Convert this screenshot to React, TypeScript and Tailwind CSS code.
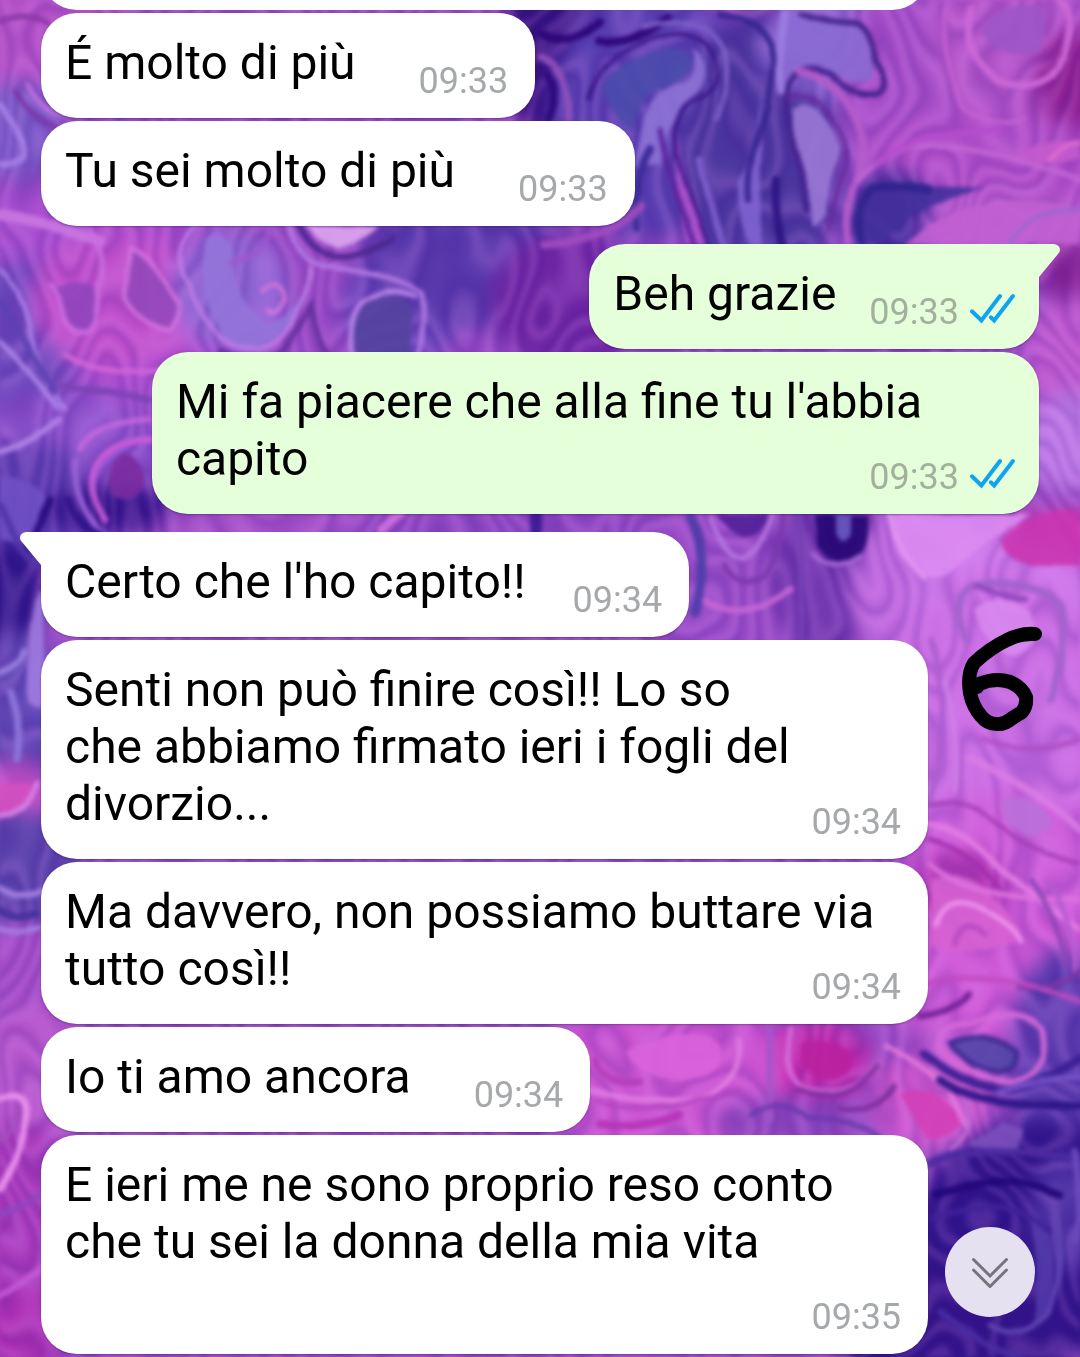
import type { ReactNode } from "react";

type Blob = [cx: number, cy: number, rx: number, ry: number, fill: string];
type Shape = [d: string, fill: string];
type Line = [d: string, stroke: string, width: number];

const washes: Blob[] = [
  [40, 40, 90, 70, "#b552c8"],
  [20, 130, 45, 50, "#7d5cc9"],
  [60, 300, 200, 110, "#a84fd0"],
  [20, 340, 60, 80, "#6d49bd"],
  [120, 300, 90, 70, "#c050cc"],
  [230, 290, 60, 60, "#8d63d2"],
  [400, 310, 60, 60, "#6c48bd"],
  [470, 260, 110, 70, "#5a3bad"],
  [570, 300, 80, 70, "#6f26a4"],
  [560, 50, 60, 90, "#33107f"],
  [650, 110, 100, 130, "#5a40b2"],
  [760, 160, 80, 150, "#4c389f"],
  [830, 50, 70, 50, "#8a66d2"],
  [930, 90, 90, 120, "#a74fc9"],
  [1010, 40, 80, 90, "#b657cb"],
  [1075, 90, 40, 60, "#8d1f92"],
  [990, 170, 130, 60, "#b24fc9"],
  [890, 220, 45, 50, "#3f2c99"],
  [1010, 230, 90, 40, "#ba5cd0"],
  [1070, 270, 30, 30, "#8a2596"],
  [1070, 360, 45, 60, "#c05ad0"],
  [1070, 440, 45, 50, "#bf7de8"],
  [1060, 540, 70, 30, "#c83cb4"],
  [60, 470, 110, 80, "#8a50ca"],
  [30, 500, 60, 60, "#5c3db0"],
  [115, 510, 70, 25, "#33148a"],
  [250, 522, 90, 30, "#a552c8"],
  [520, 522, 150, 20, "#8e48c2"],
  [10, 600, 35, 60, "#2c1588"],
  [20, 720, 45, 90, "#6249b6"],
  [15, 790, 40, 30, "#cf58cc"],
  [20, 870, 60, 60, "#5b43ac"],
  [20, 960, 50, 40, "#a34cc8"],
  [720, 570, 60, 80, "#9a4dc8"],
  [830, 570, 60, 90, "#6f35ad"],
  [920, 590, 70, 90, "#c06adf"],
  [1000, 600, 90, 70, "#cf7aec"],
  [1000, 720, 120, 150, "#cb6ee4"],
  [1010, 880, 110, 90, "#cf5fdb"],
  [960, 890, 50, 40, "#b93bb8"],
  [1000, 980, 130, 70, "#d05bd8"],
  [30, 1080, 60, 80, "#b556cc"],
  [20, 1250, 60, 130, "#a83abb"],
  [20, 1330, 50, 40, "#ad31b4"],
  [680, 1080, 150, 80, "#cc55d2"],
  [820, 1060, 50, 40, "#c22cae"],
  [800, 1120, 90, 25, "#9148c0"],
  [930, 1100, 60, 50, "#d05ad0"],
  [1060, 1060, 50, 110, "#5a3bae"],
  [1040, 1240, 130, 120, "#30148a"],
  [960, 1330, 120, 70, "#331489"],
  [1065, 1210, 35, 60, "#4e34a5"],
];

const shapes: Shape[] = [
  ["M602 90Q610 64 660 50Q690 42 690 66Q682 84 658 90Q635 105 634 130Q614 120 602 90Z", "#4a4bab"],
  ["M690 48Q712 60 700 88Q672 104 660 165L634 168L644 118Q656 88 684 82Q698 70 690 48Z", "#8d72d6"],
  ["M780 10L790 110Q792 75 812 62Q862 92 872 75Q872 34 858 26Q815 18 800 10Z", "#8a6ad3"],
  ["M792 110Q806 98 824 118Q846 140 838 160Q828 180 826 214L812 228L806 170Q790 144 792 110Z", "#9a78d6"],
  ["M763 85Q754 155 738 182Q736 220 754 244L764 244Q756 180 763 85Z", "#8063cf"],
  ["M677 135Q672 190 686 244L710 244Q688 190 677 135Z", "#b052cc"],
  ["M860 244Q856 202 876 190Q930 184 985 188Q930 204 905 220Q890 232 884 244Z", "#44309c"],
  ["M905 244Q945 205 1000 205Q1045 196 1080 208V244Z", "#c05fd2"],
  ["M1080 142Q1040 138 1010 158Q1050 168 1080 158Z", "#c45bcd"],
  ["M980 30Q1000 62 1040 52Q1052 25 1040 5Q1000 0 980 30Z", "#9d55c7"],
  ["M132 250Q125 270 127 298Q145 326 168 330Q180 310 175 298Q155 270 132 250Z", "#9448ba"],
  ["M54 290Q60 325 76 334Q98 330 98 290Q78 276 54 290Z", "#9045bc"],
  ["M205 240Q220 225 232 252Q232 290 262 320Q280 330 300 300Q308 285 300 310Q275 352 232 345Q195 300 205 240Z", "#9474d9"],
  ["M354 350Q344 315 372 300Q402 288 412 310L408 362Q380 374 354 350Z", "#54429f"],
  ["M308 226Q318 245 338 247Q365 240 378 226Z", "#dda5ee"],
  ["M108 476Q112 452 128 452Q146 464 144 485Q130 506 112 495Z", "#7a2ba0"],
  ["M0 475Q40 480 46 498Q38 535 20 545L0 540Z", "#6f50c3"],
  ["M815 514H868Q872 550 850 560Q826 566 816 545Z", "#240672"],
  ["M835 514H850V532Q842 548 835 532Z", "#6c5cc0"],
  ["M715 514H770Q765 530 752 535Q735 540 715 514Z", "#512097"],
  ["M890 514H1030Q985 540 950 575Q925 590 900 555Z", "#dd8cf2"],
  ["M1000 538Q1035 508 1080 512V565H1030Q1000 555 1000 538Z", "#ca35b1"],
  ["M975 610Q1000 590 1030 610Q1045 645 1012 655Q985 650 975 610Z", "#d988ef"],
  ["M1000 800Q1030 790 1048 815Q1060 830 1030 835Q1000 825 1000 800Z", "#ba70d8"],
  ["M38 590Q26 620 28 700Q38 715 44 700V600Z", "#a07ae0"],
  ["M0 785Q20 778 34 785Q30 808 0 815Z", "#d44fc0"],
  ["M930 880Q975 865 1000 905Q1020 920 1020 940Q960 965 930 945Z", "#d560d2"],
  ["M950 1040Q975 1028 1012 1050Q1020 1070 995 1072Q955 1065 950 1040Z", "#5346a8"],
  ["M965 1145Q995 1130 1002 1120L1022 1128L1018 1150Q990 1148 965 1145Z", "#7c50bd"],
  ["M900 1095Q935 1080 962 1120Q952 1142 925 1140Z", "#d33fb8"],
  ["M625 1050Q680 1020 720 1045Q730 1075 680 1082Q640 1080 625 1050Z", "#d863dc"],
  ["M800 1045Q825 1035 850 1050Q860 1075 825 1082Q795 1075 800 1045Z", "#b9209f"],
  ["M1035 1220Q1060 1230 1052 1300Q1048 1315 1035 1325Z", "#5138a9"],
];

const lines: Line[] = [
  ["M540 34Q575 50 600 22", "#2c0578", 8],
  ["M600 42Q640 44 668 18", "#2c0578", 8],
  ["M540 56Q570 66 570 120", "#9150bd", 7],
  ["M548 75Q560 90 548 120", "#2c0a7c", 9],
  ["M590 100Q600 60 640 44Q690 20 712 54Q728 90 690 100Q670 115 676 150Q690 200 708 244", "#3a1687", 4],
  ["M645 28Q700 10 724 50Q732 80 716 120", "#8060c8", 5],
  ["M720 16Q770 20 774 60L768 110Q744 160 748 200", "#38258f", 6],
  ["M784 12Q778 50 782 90", "#9a7de0", 8],
  ["M800 14Q830 24 856 24Q872 30 874 60Q892 86 878 93Q850 96 830 74Q800 62 790 85Q782 120 795 150Q808 170 805 210", "#44228d", 6],
  ["M790 98Q815 90 840 130Q852 150 840 180L828 230", "#652a9e", 4],
  ["M800 72Q830 78 856 112Q870 150 852 190Q845 220 848 244", "#b45cca", 8],
  ["M660 130Q668 180 694 244", "#5b239c", 5],
  ["M700 160Q710 210 724 244", "#7d5fcb", 7],
  ["M776 180Q774 220 784 244", "#2e1585", 8],
  ["M636 226Q632 180 650 150", "#3b2a98", 8],
  ["M640 205Q610 240 545 244", "#9f4cbe", 8],
  ["M862 244Q854 205 872 188Q900 184 930 190", "#30248e", 8],
  ["M858 180Q880 150 930 146Q990 145 1080 180", "#c067d5", 5],
  ["M875 165Q920 130 1000 130", "#b44dcc", 6],
  ["M970 10Q958 55 1000 82Q1045 95 1065 55Q1078 20 1060 0", "#cc68d7", 7],
  ["M945 10Q940 60 965 110Q1000 130 1025 118", "#c462d4", 4],
  ["M1010 244Q1030 210 1080 208", "#9a68d0", 4],
  ["M1050 160Q1070 140 1080 143", "#dd6ccd", 5],
  ["M0 20Q30 10 48 22", "#8b38a8", 6],
  ["M0 105Q30 140 24 158Q12 166 0 164", "#a981e8", 6],
  ["M16 90Q30 115 60 130", "#7a36a6", 5],
  ["M28 84Q44 110 60 116", "#c573df", 4],
  ["M0 215Q60 225 100 240", "#c875e0", 10],
  ["M0 270Q20 285 28 320Q34 360 64 408", "#ad85ec", 4],
  ["M0 342Q30 370 58 408", "#ad85ec", 5],
  ["M0 300Q20 330 55 392", "#5c41b1", 6],
  ["M90 228Q110 260 98 290Q98 325 88 332Q65 335 60 312Q55 290 50 285", "#cc6ee2", 5],
  ["M130 248Q150 256 180 305Q180 320 170 330Q140 325 125 298Z", "#d574e2", 4],
  ["M195 228Q165 255 190 285Q205 330 230 344Q270 356 292 325Q310 290 310 270", "#c07ee8", 4],
  ["M230 262Q245 255 260 250Q270 235 268 226", "#9e58cf", 5],
  ["M262 290Q280 275 285 300Q275 320 268 310", "#d678df", 4],
  ["M220 352Q255 366 282 350Q300 330 312 308Q320 355 340 368", "#66309f", 6],
  ["M290 226Q300 270 330 266Q400 276 420 292Q426 310 416 370", "#b47ae6", 5],
  ["M354 368Q345 320 362 302Q390 284 414 296", "#bd86eb", 5],
  ["M300 226Q312 258 345 256Q380 250 392 240", "#4b258f", 6],
  ["M65 355Q110 378 160 370", "#d467dc", 5],
  ["M60 385Q110 390 150 400", "#7b43b4", 7],
  ["M0 452Q30 440 58 420", "#b183e8", 6],
  ["M80 450Q90 425 150 420", "#c867df", 5],
  ["M76 460Q70 510 115 545", "#9c62d8", 6],
  ["M105 520Q85 490 96 465Q110 440 152 440", "#ca5cd8", 6],
  ["M50 500Q40 530 30 545", "#2b0e80", 8],
  ["M68 500Q75 525 100 535", "#31148a", 8],
  ["M380 530L400 514", "#d070de", 8],
  ["M535 514V532", "#3c1a94", 12],
  ["M690 520Q710 570 695 610", "#4f3daa", 10],
  ["M710 520Q725 560 745 556Q765 545 772 514", "#b777e2", 5],
  ["M725 565Q740 590 765 575Q780 555 785 514", "#7c38ad", 6],
  ["M800 514V640", "#7740b5", 6],
  ["M812 555Q830 575 860 555", "#ae70dc", 4],
  ["M705 600Q740 625 790 590", "#c566d6", 6],
  ["M890 514Q900 560 925 580", "#e396f2", 5],
  ["M965 640Q950 600 975 588Q1040 575 1062 610Q1068 650 1050 700", "#a263cd", 8],
  ["M978 588Q1010 600 1025 598", "#8944b8", 5],
  ["M930 640Q955 700 930 800", "#ad5fd0", 6],
  ["M945 680Q960 730 955 790", "#cf7fe8", 5],
  ["M985 740Q1030 755 1080 740", "#b04fc4", 5],
  ["M970 760Q1040 790 1080 830", "#d97be5", 7],
  ["M928 805Q960 796 985 815Q1030 850 1080 865", "#a03bb4", 4],
  ["M928 825Q960 825 1000 870L1080 930", "#e27be4", 6],
  ["M930 840Q970 850 1000 890", "#a22fae", 5],
  ["M930 865Q970 900 1080 900", "#de74df", 5],
  ["M936 925Q945 895 975 905Q1010 920 1022 940", "#ef94ee", 5],
  ["M955 945Q965 915 985 935", "#b94bc4", 6],
  ["M1030 880Q1060 920 1066 965", "#8a45b4", 5],
  ["M1048 880Q1075 920 1075 970", "#b65bd0", 5],
  ["M1020 988Q1055 990 1080 970", "#7b35a4", 5],
  ["M928 985Q980 968 1080 1000", "#c14ac2", 5],
  ["M920 1015Q950 1012 970 994", "#722096", 6],
  ["M0 505Q20 560 40 565", "#5035a6", 6],
  ["M0 672Q22 664 24 650", "#9a7fe0", 6],
  ["M12 690Q20 720 15 760", "#8d76dc", 7],
  ["M0 816Q28 812 36 782", "#d785ea", 5],
  ["M0 888Q20 904 40 892", "#a480e2", 6],
  ["M0 910Q18 924 36 915", "#44309a", 7],
  ["M0 928Q18 938 40 928", "#a87ee2", 5],
  ["M0 1098Q26 1090 28 1110Q25 1145 0 1190", "#ea90ee", 7],
  ["M0 1140Q16 1130 18 1115", "#a24fbe", 5],
  ["M0 1215Q30 1205 45 1190", "#8f46c0", 6],
  ["M0 1295Q25 1285 45 1265", "#c45bd6", 6],
  ["M590 1090Q640 1105 700 1100Q745 1080 740 1040", "#e07de4", 5],
  ["M595 1060Q600 1085 640 1082", "#b33ebb", 7],
  ["M595 1100Q640 1120 740 1090", "#b245c0", 4],
  ["M600 1125Q640 1130 680 1115", "#b533b8", 8],
  ["M770 1030V1120", "#a355ca", 6],
  ["M790 1030Q780 1080 805 1090Q850 1100 880 1065", "#d56bdb", 5],
  ["M798 1090Q845 1108 878 1066", "#7d2d9e", 5],
  ["M840 1108Q880 1112 895 1088", "#7d2d9e", 5],
  ["M750 1115Q780 1095 810 1118Q860 1118 880 1135", "#6a39ae", 5],
  ["M885 1045Q915 1060 950 1090L965 1125", "#e378dd", 5],
  ["M940 1050Q935 1020 970 1022Q1020 1005 1042 1030Q1052 1072 1010 1082Q970 1078 940 1050Z", "#d468d8", 6],
  ["M950 1042Q980 1028 1015 1050Q1020 1068 1000 1072Q965 1068 950 1042Z", "#3d2a91", 5],
  ["M925 1055Q970 1090 1010 1090Q1050 1080 1080 1060", "#3c2093", 9],
  ["M940 1080Q980 1110 1080 1105", "#2d1687", 8],
  ["M1000 1092Q1040 1078 1080 1078", "#7452c6", 6],
  ["M965 1100Q980 1130 950 1150", "#c071d8", 4],
  ["M928 1165Q970 1140 1080 1160", "#4c2aa0", 8],
  ["M935 1195Q1000 1170 1060 1195", "#22077a", 8],
  ["M930 1220Q1000 1190 1050 1230", "#40229a", 5],
  ["M1055 1210Q1068 1260 1050 1310Q1020 1345 990 1325", "#6146b4", 5],
  ["M940 1310Q980 1345 1020 1357", "#4a2da2", 6],
  ["M1075 1150Q1085 1200 1075 1240", "#6c4bbd", 7],
];

function Wallpaper() {
  return (
    <svg
      className="absolute inset-0 -z-10 size-full"
      viewBox="0 0 1080 1357"
      preserveAspectRatio="xMidYMin slice"
      aria-hidden="true"
    >
      <defs>
        <filter id="wash" x="-10%" y="-10%" width="120%" height="120%" colorInterpolationFilters="sRGB">
          <feGaussianBlur stdDeviation="10" />
        </filter>
        <filter id="marble" filterUnits="userSpaceOnUse" x="-40" y="-40" width="1160" height="1437" colorInterpolationFilters="sRGB">
          <feTurbulence type="fractalNoise" baseFrequency="0.018" numOctaves="1" seed="7" result="noise" />
          <feDisplacementMap in="SourceGraphic" in2="noise" scale="8" xChannelSelector="R" yChannelSelector="G" result="bent" />
          <feGaussianBlur in="bent" stdDeviation="2.2" />
        </filter>
        <filter id="veins" filterUnits="userSpaceOnUse" x="0" y="0" width="1080" height="1357" colorInterpolationFilters="sRGB">
          <feTurbulence type="fractalNoise" baseFrequency="0.01 0.006" numOctaves="2" seed="3" />
          <feColorMatrix values="0 0 0 0 0.22  0 0 0 0 0.04  0 0 0 0 0.54  1 0 0 0 0" />
          <feComponentTransfer>
            <feFuncA type="table" tableValues="0 0 0 1 0 0 1 0 0 1 0 0 1 0 0 1 0 0 1 0 0 1 0 0 1 0 0 1 0 0 0" />
          </feComponentTransfer>
          <feGaussianBlur stdDeviation="2" />
        </filter>
        <filter id="sheen" filterUnits="userSpaceOnUse" x="0" y="0" width="1080" height="1357" colorInterpolationFilters="sRGB">
          <feTurbulence type="fractalNoise" baseFrequency="0.01 0.006" numOctaves="2" seed="3" />
          <feColorMatrix values="0 0 0 0 0.88  0 0 0 0 0.58  0 0 0 0 0.97  1 0 0 0 0" />
          <feComponentTransfer>
            <feFuncA type="table" tableValues="0 0 0 0 1 0 0 1 0 0 1 0 0 1 0 0 1 0 0 1 0 0 1 0 0 1 0 0 1 0 0" />
          </feComponentTransfer>
          <feGaussianBlur stdDeviation="2" />
        </filter>
      </defs>
      <rect width="1080" height="1357" fill="#9a4cc6" />
      <g filter="url(#wash)">
        {washes.map(([cx, cy, rx, ry, fill], i) => (
          <ellipse key={i} cx={cx} cy={cy} rx={rx} ry={ry} fill={fill} />
        ))}
      </g>
      <rect width="1080" height="1357" filter="url(#veins)" opacity="0.18" />
      <rect width="1080" height="1357" filter="url(#sheen)" opacity="0.2" />
      <g filter="url(#marble)">
        {shapes.map(([d, fill], i) => (
          <path key={i} d={d} fill={fill} opacity="0.9" />
        ))}
        {lines.map(([d, stroke, width], i) => (
          <path key={i} d={d} fill="none" stroke={stroke} strokeWidth={width} strokeLinecap="round" opacity="0.95" />
        ))}
      </g>
    </svg>
  );
}

function ReadTicks() {
  return (
    <svg className="mb-[9px] h-8 w-[46px]" viewBox="0 0 46 32" fill="none" role="img" aria-label="Letto">
      <g stroke="#0ea5ee" strokeWidth="4" strokeLinecap="round" strokeLinejoin="miter">
        <path d="M2 19.3L11.4 28.5L30 4" />
        <path d="M20.8 25.3L24.2 28.5L43 4" />
      </g>
    </svg>
  );
}

type Message = {
  lines: string[];
  time: string;
  mine?: boolean;
  first?: boolean;
  tight?: boolean;
  openEnd?: boolean;
};

function Tail({ mine }: { mine?: boolean }) {
  return (
    <svg
      className={
        mine
          ? "absolute top-0 left-full -ml-px h-[34px] w-[22px] text-[#e5ffdb]"
          : "absolute top-0 right-full -mr-px h-[34px] w-[22px] -scale-x-100 text-white"
      }
      viewBox="0 0 22 34"
      aria-hidden="true"
    >
      <path d="M0 0H16Q22 1 22 6Q22 8 20 10L1 33H0Z" fill="currentColor" />
    </svg>
  );
}

function Stamp({ time, mine }: { time: string; mine?: boolean }) {
  return (
    <div className="col-start-1 row-start-1 flex items-end gap-[11px] self-end justify-self-end pb-4">
      <time className={mine ? "text-4xl leading-[42px] text-[#a3b09c]" : "text-4xl leading-[42px] text-[#a6a9ab]"}>
        {time}
      </time>
      {mine && <ReadTicks />}
    </div>
  );
}

function Bubble({ lines, time, mine, first, tight, openEnd }: Message) {
  const single = lines.length === 1;
  const shell = [
    "relative pl-6 pt-[21px] rounded-[36px] shadow-[0_1px_2px_rgba(40,10,70,0.35)]",
    mine ? "self-end bg-[#e5ffdb] pr-[23px]" : "self-start bg-white pr-[27px]",
    first && mine ? "rounded-tr-none" : "",
    first && !mine ? "rounded-tl-none" : "",
    first ? "mt-[15px]" : "",
    single ? "flex" : "grid w-8/9",
    single ? (mine ? "gap-[33px]" : tight ? "gap-[47px]" : "gap-[63px]") : "",
  ].join(" ");

  return (
    <li className={shell}>
      {first && <Tail mine={mine} />}
      <p
        className={
          openEnd ? "col-start-1 row-start-1 pb-[84px]" : "col-start-1 row-start-1 pb-[27px]"
        }
      >
        {lines.map((line) => (
          <span key={line} className="block whitespace-nowrap">
            {line}
          </span>
        ))}
      </p>
      <Stamp time={time} mine={mine} />
    </li>
  );
}

const messages: Message[] = [
  { lines: ["É molto di più"], time: "09:33" },
  { lines: ["Tu sei molto di più"], time: "09:33" },
  { lines: ["Beh grazie"], time: "09:33", mine: true, first: true },
  { lines: ["Mi fa piacere che alla fine tu l'abbia", "capito"], time: "09:33", mine: true },
  { lines: ["Certo che l'ho capito!!"], time: "09:34", first: true, tight: true },
  { lines: ["Senti non può finire così!! Lo so", "che abbiamo firmato ieri i fogli del", "divorzio..."], time: "09:34" },
  { lines: ["Ma davvero, non possiamo buttare via", "tutto così!!"], time: "09:34" },
  { lines: ["Io ti amo ancora"], time: "09:34" },
  { lines: ["E ieri me ne sono proprio reso conto", "che tu sei la donna della mia vita"], time: "09:35", openEnd: true },
];

function Conversation({ children }: { children: ReactNode }) {
  return (
    <ol className="flex flex-col gap-[3px] px-[41px] pb-[3px] text-5xl leading-[57px] text-black">{children}</ol>
  );
}

export default function App() {
  return (
    <main className="relative isolate min-h-screen overflow-hidden font-['Roboto',sans-serif]">
      <Wallpaper />
      <Conversation>
        <li className="flex h-2.5 w-8/9 items-end overflow-hidden" aria-hidden="true">
          <div className="h-[105px] w-full shrink-0 rounded-[36px] bg-white" />
        </li>
        {messages.map((message) => (
          <Bubble key={message.lines[0]} {...message} />
        ))}
      </Conversation>

      <svg
        className="absolute top-[625px] right-9 h-[108px] w-[84px]"
        viewBox="960 625 84 108"
        fill="none"
        role="img"
        aria-label="6"
      >
        <path
          d="M1035 634Q1020 633 1007 640Q990 648 974 663Q967 674 970 693Q973 707 981 716Q988 725 999 724Q1005 724 1011 719L1022 712Q1027 706 1026 697Q1022 687 1010 682Q995 677 979 684L977 687"
          stroke="#000"
          strokeWidth="14"
          strokeLinecap="round"
          strokeLinejoin="round"
        />
      </svg>

      <button
        type="button"
        aria-label="Vai all'ultimo messaggio"
        className="absolute right-[45px] bottom-10 flex size-[90px] items-center justify-center rounded-full bg-[#e6e1f0]"
      >
        <svg className="h-8 w-10" viewBox="0 0 40 32" fill="none" stroke="#77757c" strokeWidth="3" strokeLinecap="round" aria-hidden="true">
          <path d="M3.500 3.500L20 20L36.500 3.500" />
          <path d="M3.500 14L20 30.500L36.500 14" />
        </svg>
      </button>
    </main>
  );
}
